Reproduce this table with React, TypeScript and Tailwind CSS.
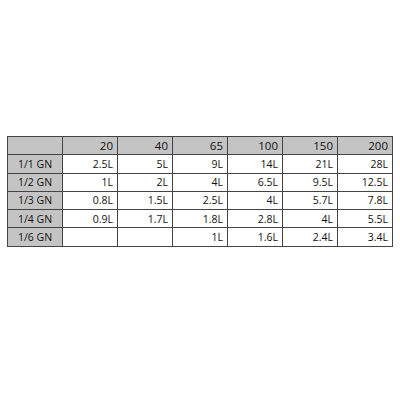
const cols = ["20", "40", "65", "100", "150", "200"];

const rows: { label: string; values: string[] }[] = [
  { label: "1/1 GN", values: ["2.5L", "5L", "9L", "14L", "21L", "28L"] },
  { label: "1/2 GN", values: ["1L", "2L", "4L", "6.5L", "9.5L", "12.5L"] },
  { label: "1/3 GN", values: ["0.8L", "1.5L", "2.5L", "4L", "5.7L", "7.8L"] },
  { label: "1/4 GN", values: ["0.9L", "1.7L", "1.8L", "2.8L", "4L", "5.5L"] },
  { label: "1/6 GN", values: ["", "", "1L", "1.6L", "2.4L", "3.4L"] },
];

export default function App() {
  return (
    <div className="w-[400px] h-[400px] bg-white pt-[136px] pl-[7px] font-['Open_Sans',sans-serif] text-[10.5px] text-[#111]">
      <table className="w-[386px] border-collapse table-fixed">
        <thead>
          <tr className="h-[18.3px] bg-[#c4c4c4]">
            <th className="border border-[#444] p-0"></th>
            {cols.map((c) => (
              <th key={c} className="border border-[#444] px-[4px] py-0 text-right font-normal text-[11.5px] leading-none">
                {c}
              </th>
            ))}
          </tr>
        </thead>
        <tbody>
          {rows.map((r) => (
            <tr key={r.label} className="h-[18.3px]">
              <td className="border border-[#444] bg-[#c4c4c4] p-0 text-center leading-none">{r.label}</td>
              {r.values.map((v, i) => (
                <td key={i} className="border border-[#444] px-[4px] py-0 text-right leading-none">
                  {v}
                </td>
              ))}
            </tr>
          ))}
        </tbody>
      </table>
    </div>
  );
}
